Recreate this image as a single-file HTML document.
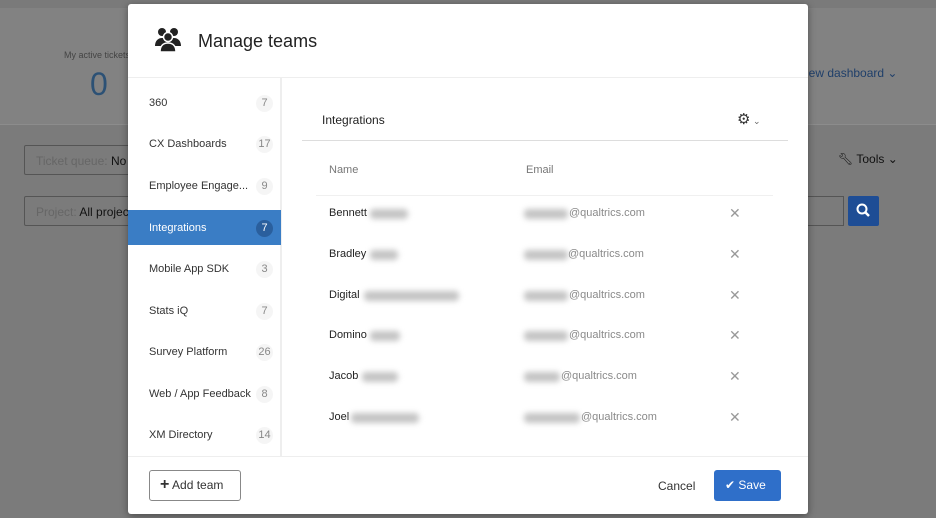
<!DOCTYPE html><html><head><style>
*{margin:0;padding:0;box-sizing:border-box}
body{width:936px;height:518px;overflow:hidden;background:#7b7b7b;font-family:"Liberation Sans",sans-serif;position:relative}
.abs{position:absolute}
.blur{position:absolute;background:#c4c4c4;filter:blur(3px);height:10px;border-radius:4px}
.side div{position:absolute;left:0;width:153px;height:35px;font-size:11px;color:#333;padding-left:21px;line-height:37px}
.side span{position:absolute;right:8px;top:10px;width:17px;height:17px;border-radius:50%;background:#f5f5f5;color:#888;font-size:11px;text-align:center;line-height:17px}
.row{position:absolute;left:329px;font-size:11px;color:#222}
.em{position:absolute;font-size:11px;color:#8a8a8a}
.x{position:absolute;left:729px;font-size:14px;color:#999;font-weight:300}
</style></head><body>
<div class="abs" style="left:0;top:0;width:936px;height:124px;background:#828282"></div>
<div class="abs" style="left:0;top:124px;width:936px;height:1px;background:#8c8c8c"></div>
<div class="abs" style="left:0;top:0;width:936px;height:8px;background:#7a7a7a"></div>
<div class="abs" style="left:64px;top:50px;font-size:9px;color:#444">My active tickets</div>
<div class="abs" style="left:90px;top:66px;font-size:32px;color:#2c5175">0</div>
<div class="abs" style="left:24px;top:145px;width:120px;height:30px;border:1px solid #555;border-radius:2px;font-size:12px;color:#666;padding:8px 11px;white-space:nowrap;overflow:hidden">Ticket queue: <span style="color:#111">No</span></div>
<div class="abs" style="left:24px;top:196px;width:120px;height:30px;border:1px solid #555;border-radius:2px;font-size:12px;color:#666;padding:8px 11px;white-space:nowrap;overflow:hidden">Project: <span style="color:#111">All projects</span></div>
<div class="abs" style="left:806px;top:66px;font-size:12px;color:#1f3f6a">iew dashboard ⌄</div>
<div class="abs" style="left:838px;top:152px;font-size:12px;color:#111">🔧︎ Tools ⌄</div>
<div class="abs" style="left:800px;top:196px;width:44px;height:30px;border:1px solid #555;border-left:none"></div>
<div class="abs" style="left:848px;top:196px;width:31px;height:30px;background:#1e4d95;border-radius:2px"><svg width="31" height="30"><circle cx="14" cy="13" r="4.5" fill="none" stroke="#fff" stroke-width="2"/><path d="M17 16l4 4" stroke="#fff" stroke-width="2.5"/></svg></div>

<div class="abs" style="left:128px;top:4px;width:680px;height:510px;background:#fff;border-radius:3px;box-shadow:0 2px 8px rgba(0,0,0,.4)">
<svg class="abs" style="left:26px;top:22px" width="28" height="26" viewBox="0 0 28 26"><circle cx="8" cy="6" r="4" fill="#222"/><circle cx="20" cy="6" r="4" fill="#222"/><path d="M1 20c0-5 3-8 7-8s6 3 6 8z" fill="#222"/><path d="M14 20c0-5 2-8 6-8s7 3 7 8z" fill="#222"/><circle cx="14" cy="11" r="4.5" fill="#222" stroke="#fff" stroke-width="1.5"/><path d="M6 26c0-6 3-9 8-9s8 3 8 9z" fill="#222" stroke="#fff" stroke-width="1.5"/></svg>
<div class="abs" style="left:70px;top:27px;font-size:18px;color:#222">Manage teams</div>
<div class="abs" style="left:0;top:73px;width:680px;height:1px;background:#eee"></div>
<div class="abs" style="left:152px;top:74px;width:2px;height:378px;background:#eee"></div>
<div class="side abs" style="left:0;top:81px;width:153px">
<div style="top:0">360<span>7</span></div>
<div style="top:41px">CX Dashboards<span>17</span></div>
<div style="top:83px">Employee Engage...<span>9</span></div>
<div style="top:125px;background:#3a7dc5;color:#fff">Integrations<span style="background:#2a5f9d;color:#fff">7</span></div>
<div style="top:166px">Mobile App SDK<span>3</span></div>
<div style="top:208px">Stats iQ<span>7</span></div>
<div style="top:249px">Survey Platform<span>26</span></div>
<div style="top:291px">Web / App Feedback<span>8</span></div>
<div style="top:332px">XM Directory<span>14</span></div>
</div>
<div class="abs" style="left:0;top:452px;width:680px;height:1px;background:#eee"></div>
<div class="abs" style="left:21px;top:466px;width:92px;height:31px;border:1px solid #888;border-radius:3px;font-size:12px;color:#333;padding:7px 0 0 10px"><b style="font-size:16px;line-height:12px">+</b> Add team</div>
<div class="abs" style="left:530px;top:475px;font-size:12px;color:#333">Cancel</div>
<div class="abs" style="left:586px;top:466px;width:67px;height:31px;background:#2f6fc9;border-radius:3px;font-size:12px;color:#fff;padding:8px 0 0 11px">✔ Save</div>
</div>
<div class="abs" style="left:322px;top:113px;font-size:12px;color:#222">Integrations</div>
<div class="abs" style="left:737px;top:110px;font-size:15px;color:#333">⚙<span style="font-size:9px;color:#666"> ⌄</span></div>
<div class="abs" style="left:302px;top:140px;width:486px;height:1px;background:#ddd"></div>
<div class="abs" style="left:329px;top:164px;font-size:11px;color:#777">Name</div>
<div class="abs" style="left:526px;top:164px;font-size:11px;color:#777">Email</div>
<div class="abs" style="left:316px;top:195px;width:457px;height:1px;background:#f0f0f0"></div>

<div class="row" style="top:207px">Bennett</div><div class="blur" style="left:370px;top:209px;width:38px"></div>
<div class="blur" style="left:524px;top:209px;width:44px"></div><div class="em" style="left:569px;top:207px">@qualtrics.com</div><div class="x" style="top:205px">✕</div>
<div class="row" style="top:248px">Bradley</div><div class="blur" style="left:370px;top:250px;width:28px"></div>
<div class="blur" style="left:524px;top:250px;width:44px"></div><div class="em" style="left:568px;top:248px">@qualtrics.com</div><div class="x" style="top:246px">✕</div>
<div class="row" style="top:289px">Digital</div><div class="blur" style="left:364px;top:291px;width:95px"></div>
<div class="blur" style="left:524px;top:291px;width:44px"></div><div class="em" style="left:569px;top:289px">@qualtrics.com</div><div class="x" style="top:287px">✕</div>
<div class="row" style="top:329px">Domino</div><div class="blur" style="left:370px;top:331px;width:30px"></div>
<div class="blur" style="left:524px;top:331px;width:44px"></div><div class="em" style="left:569px;top:329px">@qualtrics.com</div><div class="x" style="top:327px">✕</div>
<div class="row" style="top:370px">Jacob</div><div class="blur" style="left:362px;top:372px;width:36px"></div>
<div class="blur" style="left:524px;top:372px;width:36px"></div><div class="em" style="left:561px;top:370px">@qualtrics.com</div><div class="x" style="top:368px">✕</div>
<div class="row" style="top:411px">Joel</div><div class="blur" style="left:351px;top:413px;width:68px"></div>
<div class="blur" style="left:524px;top:413px;width:56px"></div><div class="em" style="left:581px;top:411px">@qualtrics.com</div><div class="x" style="top:409px">✕</div>
</body></html>
